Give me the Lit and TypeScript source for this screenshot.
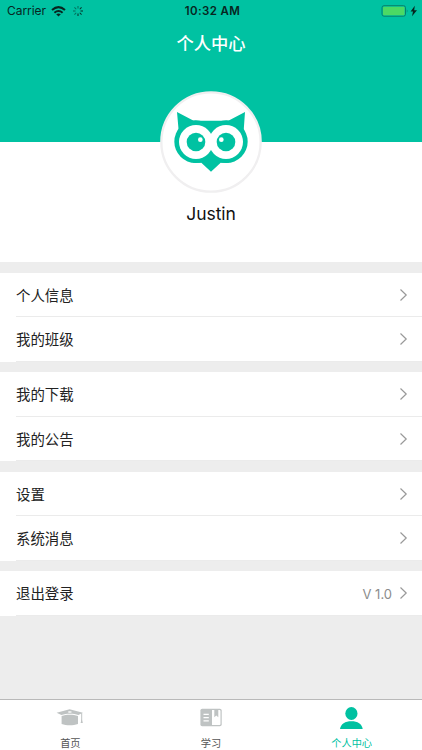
import { LitElement, html, css, svg } from "lit";
import { customElement } from "lit/decorators.js";

interface Row { label: string; value?: string }

const groups: Row[][] = [
  [{ label: "个人信息" }, { label: "我的班级" }],
  [{ label: "我的下载" }, { label: "我的公告" }],
  [{ label: "设置" }, { label: "系统消息" }],
  [{ label: "退出登录", value: "V 1.0" }],
];

const capIcon = html`<svg width="28" height="20" viewBox="0 0 28 20" fill="#bfc3c3">
  <path d="M5.600 8 C10.500 6.300 17 6.300 22 8 V16 C17 17.800 10.500 17.800 5.600 16 Z"/>
  <path d="M.6 4.800 L13.600 1.300 L26.900 4.800 L22.400 7 C17.500 5.200 10.500 5.200 5.400 7 Z"/>
  <ellipse cx="13.800" cy="4" rx="2" ry=".8" fill="#fff"/>
  <path d="M25.700 5 V14.800" stroke="#bfc3c3" stroke-width="1"/>
  <path d="M25.700 11 L26.800 15 H24.600 Z"/>
</svg>`;

const bookIcon = html`<svg width="22" height="19" viewBox="0 0 22 19">
  <rect x=".4" y=".7" width="21.300" height="17.600" rx="1.800" fill="#bfc3c3"/>
  <path d="M12 2 H14.300 V9.200 L16.300 7.500 L18.300 9.200 V2 H19.600 Q20.500 2 20.500 3 V16 Q20.500 17 19.600 17 H12 Z" fill="#fff"/>
  <path d="M3.500 6.300 H8.800 M3.500 9.600 H8.800 M3.500 12.900 H8.800" stroke="#fff" stroke-width="1.200"/>
</svg>`;

const personIcon = html`<svg width="24" height="24" viewBox="0 0 24 24" fill="#00c1a1">
  <ellipse cx="11.400" cy="7.500" rx="6.100" ry="6.500"/>
  <path d="M0 23 C.7 17.800 5.200 15.200 11.400 15.200 S22 17.800 22.700 23 Z"/>
</svg>`;

const tabs = [
  { label: "首页", icon: capIcon, active: false },
  { label: "学习", icon: bookIcon, active: false },
  { label: "个人中心", icon: personIcon, active: true },
];

@customElement("app-root")
export class AppRoot extends LitElement {
  static styles = css`
    :host {
      display: flex; flex-direction: column; width: 422px; height: 750px;
      background: #ededed; color: #222; overflow: hidden;
      font-family: Inter, "Noto Sans CJK SC", sans-serif;
    }
    svg { display: block; flex: none; }
    .header { height: 142px; background: #00c2a2; flex: none; }
    .status {
      height: 22px; display: grid; grid-template-columns: 1fr auto 1fr;
      align-items: center; color: #07261f; font-size: 12px; line-height: 22px;
    }
    .left { display: flex; align-items: center; padding-left: 7px; }
    .carrier { width: 39px; letter-spacing: -.05px; }
    .wifi { margin-left: 5px; }
    .spinner { margin-left: 6px; }
    .time { font-weight: 600; font-size: 11.500px; letter-spacing: .35px; padding-left: 3px; }
    .right { display: flex; justify-content: flex-end; padding-right: 4px; }
    .title {
      margin: 0; text-align: center; color: #fff; font-weight: 500;
      font-size: 17.300px; line-height: 44px;
    }
    .profile {
      height: 120px; background: #fff; flex: none; display: flex;
      flex-direction: column; align-items: center;
    }
    .avatar { margin-top: -51px; }
    .name { font-size: 17.500px; line-height: 24px; margin-top: 9px; color: #111; letter-spacing: -.1px; }
    .group { background: #fff; margin-top: 10.500px; flex: none; }
    .row {
      height: 44.500px; box-sizing: border-box; margin-left: 16px; padding-right: 14px;
      display: flex; align-items: center; border-bottom: 1px solid #ebebeb;
      font-size: 14.400px; line-height: 22px;
    }
    .label { flex: 1; padding-top: 3px; }
    .value { color: #8c8c8c; font-size: 13px; margin-right: 7px; padding-top: 2px; }
    .chevron { margin-top: 1px; }
    .tabs {
      margin-top: auto; height: 51px; box-sizing: border-box; border-top: 1px solid #b9b9b9;
      background: #fff; display: grid; grid-template-columns: repeat(3, 1fr); flex: none;
    }
    .tab { display: flex; flex-direction: column; align-items: center; color: #555; }
    .icon { height: 36px; padding-bottom: 1px; box-sizing: border-box; display: flex; align-items: center; }
    .caption { font-size: 10.200px; line-height: 14px; }
    .active { color: #00c1a1; }
  `;

  private spinner() {
    return html`<svg class="spinner" width="12" height="12" viewBox="-6 -6 12 12" stroke="#07261f" stroke-width="1">
      ${[0, 1, 2, 3, 4, 5, 6, 7].map((i) => svg`<path d="M0 -2.500 V-5" transform="rotate(${i * 45})" opacity=${i > 0 && i < 5 ? 0.95 : 0.55} />`)}
    </svg>`;
  }

  private owl() {
    return html`<svg class="avatar" width="102" height="102" viewBox="30 17 306 306">
      <circle cx="183" cy="170" r="149" fill="#fff" stroke="#f0eff0" stroke-width="7"/>
      <g fill="#00c2a2">
        <path d="M81 80 L131 106 H235 L285 80 L281 136 L236 232 H212 L183 259 L154 232 H130 L86 136 Z"/>
        <circle cx="137" cy="169" r="64"/><circle cx="229" cy="169" r="64"/>
      </g>
      <circle cx="138" cy="170" r="51" fill="#fff"/><circle cx="228" cy="170" r="51" fill="#fff"/>
      <circle cx="138" cy="170" r="28" fill="#00c2a2"/><circle cx="228" cy="170" r="28" fill="#00c2a2"/>
      <circle cx="151" cy="163" r="7" fill="#fff"/><circle cx="214" cy="163" r="7" fill="#fff"/>
    </svg>`;
  }

  render() {
    return html`
      <header class="header">
        <div class="status">
          <div class="left">
            <span class="carrier">Carrier</span>
            <svg class="wifi" width="15" height="11" viewBox="0 0 15 11" fill="none" stroke="#07261f" stroke-width="2">
              <path d="M1 4 Q7.500 -1.800 14 4 M3.400 6.700 Q7.500 3.200 11.600 6.700"/>
              <path d="M5.200 8.300 Q7.500 6.600 9.800 8.300 L7.500 10.600 Z" fill="#07261f" stroke="none"/>
            </svg>
            ${this.spinner()}
          </div>
          <span class="time">10:32 AM</span>
          <div class="right">
            <svg width="37" height="12" viewBox="0 0 37 12">
              <rect x="1" y=".7" width="23.500" height="10.500" rx="2" fill="none" stroke="#08806a"/>
              <rect x="2" y="1.700" width="21.500" height="8.500" rx="1" fill="#4cd964"/>
              <path d="M25.800 4.300 Q27.300 6 25.800 7.700 Z" fill="#08806a"/>
              <path d="M33.800 .8 L29.600 6.500 H32 L31 11.200 L36 5.200 H33.200 Z" fill="#07261f"/>
            </svg>
          </div>
        </div>
        <h1 class="title">个人中心</h1>
      </header>
      <section class="profile">${this.owl()}<div class="name">Justin</div></section>
      ${groups.map((g) => html`<section class="group">${g.map((r) => html`
        <div class="row">
          <span class="label">${r.label}</span>
          ${r.value ? html`<span class="value">${r.value}</span>` : ""}
          <svg class="chevron" width="9" height="14" viewBox="0 0 9 14" fill="none" stroke="#999" stroke-width="1.200">
            <path d="M1.500 1.500 L7.200 7 L1.500 12.500"/>
          </svg>
        </div>`)}</section>`)}
      <nav class="tabs">${tabs.map((t) => html`
        <div class="tab ${t.active ? "active" : ""}">
          <div class="icon">${t.icon}</div><span class="caption">${t.label}</span>
        </div>`)}</nav>
    `;
  }
}
